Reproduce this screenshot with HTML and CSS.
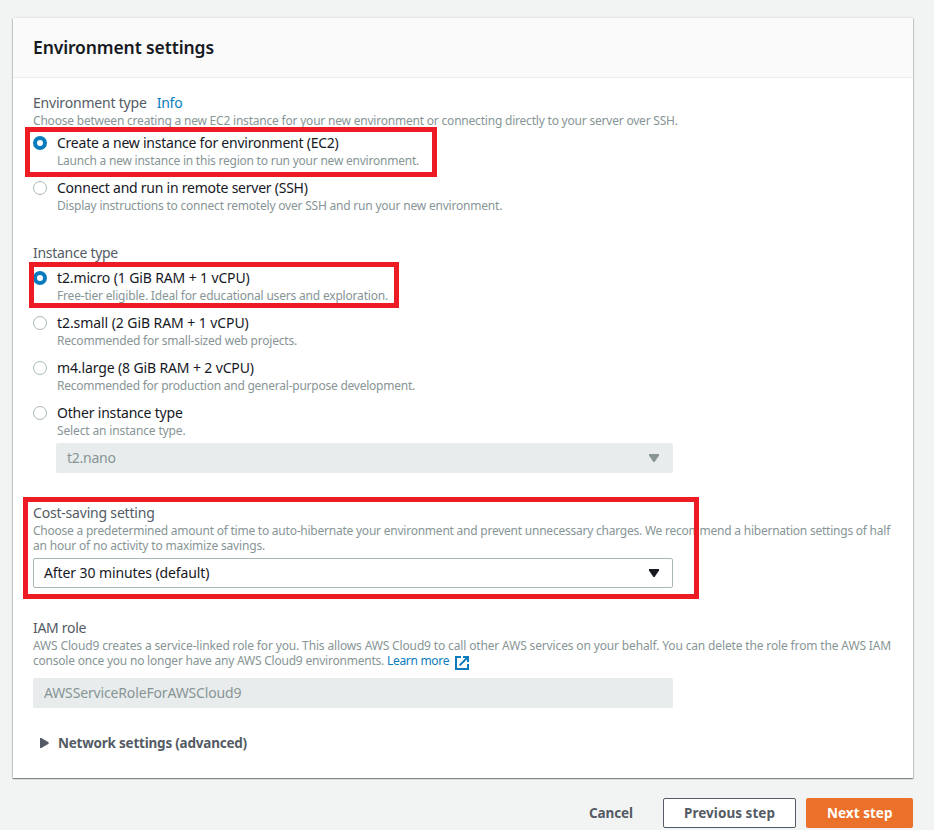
FILE: index.html
```html
<!DOCTYPE html>
<html lang="en">
<head>
<meta charset="utf-8">
<title>Environment settings</title>
<link rel="stylesheet" href="styles.css">
</head>
<body>
<main class="page">
  <section class="card">
    <header class="card-header"><h1>Environment settings</h1></header>
    <div class="card-body">
      <div class="group">
        <div class="label">Environment type<a class="info">Info</a></div>
        <div class="hint"><p>Choose between creating a new EC2 instance for your new environment or connecting directly to your server over SSH.</p></div>
        <div class="options">
          <div class="option"><span class="radio checked"></span><div><div class="name">Create a new instance for environment (EC2)</div><div class="hint launch">Launch a new instance in this region to run your new environment.</div></div></div>
          <div class="option"><span class="radio"></span><div><div class="name">Connect and run in remote server (SSH)</div><div class="hint">Display instructions to connect remotely over SSH and run your new environment.</div></div></div>
        </div>
        <div class="mark mark-type"></div>
      </div>

      <div class="group">
        <div class="label instance">Instance type</div>
        <div class="options">
          <div class="option"><span class="radio checked"></span><div><div class="name spec">t2.micro (1 GiB RAM + 1 vCPU)</div><div class="hint tier">Free-tier eligible. Ideal for educational users and exploration.</div></div></div>
          <div class="option"><span class="radio"></span><div><div class="name spec small">t2.small (2 GiB RAM + 1 vCPU)</div><div class="hint">Recommended for small-sized web projects.</div></div></div>
          <div class="option"><span class="radio"></span><div><div class="name spec">m4.large (8 GiB RAM + 2 vCPU)</div><div class="hint prod">Recommended for production and general-purpose development.</div></div></div>
          <div class="option"><span class="radio"></span><div><div class="name other">Other instance type</div><div class="hint pick">Select an instance type.</div></div></div>
        </div>
        <div class="field disabled nested"><span>t2.nano</span><svg class="caret" width="10" height="8" viewBox="0 0 10 8"><path d="M0 0H10V1.5L5.6 8H4.4L0 1.5Z"/></svg></div>
        <div class="mark mark-instance"></div>
      </div>

      <div class="group">
        <div class="label">Cost-saving setting</div>
        <div class="hint"><p class="choose">Choose a predetermined amount of time to auto-hibernate your environment and prevent unnecessary charges. We recommend a hibernation settings of half</p><p class="hour">an hour of no activity to maximize savings.</p></div>
        <div class="field select"><span>After 30 minutes (default)</span><svg class="caret" width="10" height="8" viewBox="0 0 10 8"><path d="M0 0H10V1.5L5.6 8H4.4L0 1.5Z"/></svg></div>
        <div class="mark mark-cost"></div>
      </div>

      <div class="group">
        <div class="label role">IAM role</div>
        <div class="hint"><p class="creates">AWS Cloud9 creates a service-linked role for you. This allows AWS Cloud9 to call other AWS services on your behalf. You can delete the role from the AWS IAM</p><p class="console">console once you no longer have any AWS Cloud9 environments. <a class="more">Learn more</a><svg class="external" width="14" height="14" viewBox="0 0 14 14"><path d="M6 1H1V13H13V8" fill="none" stroke="currentColor" stroke-width="2"/><path d="M8 1H13V6M13 1L4.6 9.4" fill="none" stroke="currentColor" stroke-width="2"/></svg></p></div>
        <div class="field disabled arn"><span>AWSServiceRoleForAWSCloud9</span></div>
      </div>

      <div class="expander"><svg width="9" height="10" viewBox="0 0 9 10"><path d="M0 0H1.3L8.6 4.3V5.7L1.3 10H0Z"/></svg><span>Network settings (advanced)</span></div>
    </div>
  </section>
  <footer class="actions">
    <button class="btn link">Cancel</button>
    <button class="btn normal">Previous step</button>
    <button class="btn primary">Next step</button>
  </footer>
</main>
</body>
</html>
```
FILE: styles.css
```css
* { box-sizing: border-box; }
body {
  margin: 0;
  height: 830px;
  overflow: hidden;
  background: #f2f3f3;
  color: #16191f;
  font: 14px/20px "Noto Sans", "Open Sans", sans-serif;
  letter-spacing: -0.24px;
}
p, h1 { margin: 0; }
.page { padding: 18px 21px 0 13px; }
.card {
  height: 760px;
  background: #fff;
  box-shadow: 0 1px 1px 0 rgba(0, 28, 36, .3), 1px 1px 1px 0 rgba(0, 28, 36, .15), -1px 1px 1px 0 rgba(0, 28, 36, .15), 0 -1px 1px 0 #e4e8e8;
}
.card-header {
  height: 60px;
  padding: 18px 20px 0;
  background: #fafafa;
  border-bottom: 1px solid #eaeded;
}
h1 { font-size: 17.5px; line-height: 22px; font-weight: 600; letter-spacing: -0.12px; }
.card-body { padding: 15px 20px 0; }
.group { position: relative; margin-bottom: 30px; }
.label { color: #545b64; letter-spacing: -0.2px; }
.instance { letter-spacing: -0.28px; }
.role { letter-spacing: -0.31px; }
.info { margin-left: 10px; color: #0a7cbd; }
.hint {
  color: #879596;
  font-size: 12px;
  line-height: 15px;
  letter-spacing: -0.207px;
  white-space: nowrap;
}
.launch { letter-spacing: -0.226px; }
.tier { letter-spacing: -0.19px; }
.prod { letter-spacing: -0.237px; }
.pick { letter-spacing: -0.14px; }
.choose { letter-spacing: -0.231px; }
.hour { letter-spacing: -0.182px; }
.creates { letter-spacing: -0.147px; }
.console { display: flex; letter-spacing: -0.22px; }
.more { margin-left: 3px; color: #0a7cbd; letter-spacing: -0.32px; }
.external { margin: 3px 0 -2px 6px; color: #0a7cbd; }
.options { display: grid; gap: 10px; margin-top: 5px; }
.option { display: flex; gap: 10px; }
.spec { letter-spacing: -0.13px; }
.small { letter-spacing: -0.075px; }
.other { letter-spacing: -0.2px; }
.radio {
  width: 14px;
  height: 14px;
  margin-top: 3px;
  border: 1px solid #aab7b8;
  border-radius: 50%;
  background: #fff;
}
.radio.checked { border: 4px solid #0a7cbd; }
.field {
  display: flex;
  align-items: center;
  justify-content: space-between;
  width: 640px;
  height: 30px;
  padding: 0 14px 0 11px;
  border-radius: 2px;
}
.disabled { background: #e8ecec; color: #879596; }
.nested { width: 617px; margin: 5px 0 0 23px; }
.select {
  margin-top: 5px;
  padding: 0 13px 0 10px;
  border: 1px solid #aab7b8;
  letter-spacing: -0.1px;
}
.arn { margin-top: 10px; letter-spacing: -0.15px; }
.caret { fill: currentColor; }
.expander {
  display: flex;
  align-items: center;
  gap: 9px;
  padding-left: 7px;
  margin-top: -5px;
  color: #545b64;
  font-size: 13.5px;
  font-weight: 700;
  letter-spacing: -0.22px;
}
.expander svg { fill: #545b64; }
.mark { position: absolute; border: 5px solid #ed1c24; pointer-events: none; }
.mark-type { left: -8px; top: 34px; width: 412px; height: 50px; }
.mark-instance { left: -4px; top: 19px; width: 370px; height: 46px; }
.mark-cost { left: -10px; top: -6px; width: 676px; height: 102px; }
.actions { display: flex; justify-content: flex-end; gap: 10px; margin-top: 20px; }
.btn {
  height: 30px;
  padding: 0 20px;
  border: 1px solid transparent;
  border-radius: 2px;
  background: none;
  color: #545b64;
  font: 700 13.5px/20px "Noto Sans", "Open Sans", sans-serif;
  letter-spacing: 0.04px;
  white-space: nowrap;
}
.link { padding: 0 19px; letter-spacing: -0.1px; }
.normal { width: 133px; background: #fff; border-color: #545b64; }
.primary { width: 107px; background: #eb7029; color: #fff; }
```
